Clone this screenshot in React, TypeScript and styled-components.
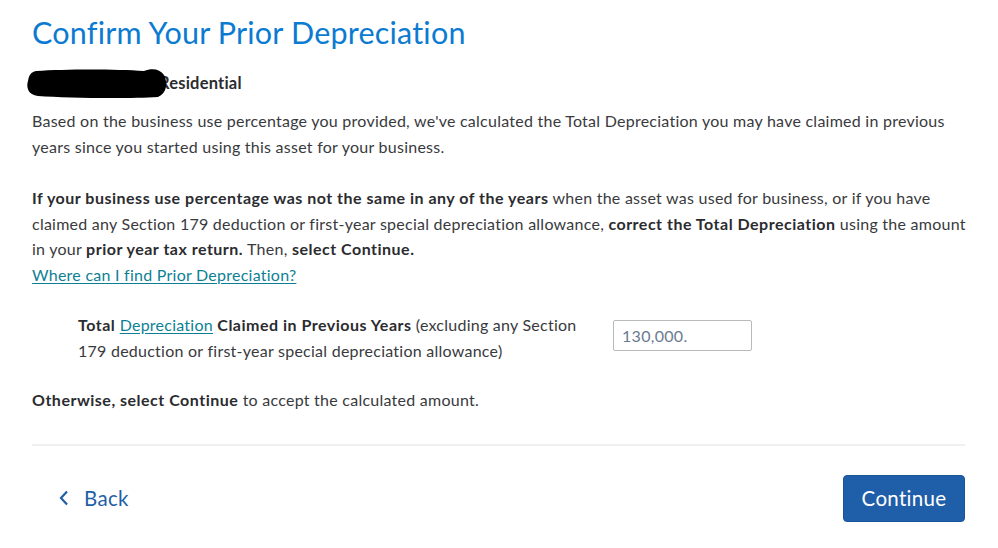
import React from "react";
import styled, { createGlobalStyle } from "styled-components";

const GlobalStyle = createGlobalStyle`
	html, body {
		margin: 0;
		padding: 0;
		background: #ffffff;
	}
	body {
		font-family: "Lato", "Noto Sans", sans-serif;
		color: #393a3d;
	}
`;

const Page = styled.div`
	width: 998px;
	height: 548px;
	box-sizing: border-box;
	padding: 14px 33px 0 32px;
	display: flex;
	flex-direction: column;
`;

const Title = styled.h1`
	margin: 0;
	font-size: 30.5px;
	font-weight: 400;
	color: #0b7bd1;
	line-height: 36px;
	letter-spacing: 0.2px;
`;

const AssetRow = styled.div`
	display: flex;
	align-items: center;
	margin: 18px 0 0 -6px;
	height: 30px;
`;

const Blob = styled.svg`
	position: relative;
	z-index: 1;
	flex-shrink: 0;
`;

const AssetName = styled.span`
	margin-left: -10px;
	font-size: 16.5px;
	font-weight: 700;
	color: #2b2c2f;
	letter-spacing: 0.2px;
`;

const Paragraph = styled.p<{ $top?: number }>`
	margin: ${p => p.$top ?? 0}px -8px 0 0;
	font-size: 16px;
	line-height: 25.5px;
	letter-spacing: 0.25px;
`;

const Strong = styled.b`
	font-weight: 700;
	color: #2b2c2f;
	letter-spacing: 0.5px;
`;

const TextLink = styled.a`
	color: #0d7f95;
	text-decoration: underline;
	text-underline-offset: 2px;
	cursor: pointer;
`;

const FieldRow = styled.div`
	display: flex;
	align-items: center;
	margin: 25px 0 0 46px;
`;

const FieldLabel = styled.div`
	width: 512px;
	font-size: 16px;
	line-height: 26px;
	letter-spacing: 0.25px;
`;

const AmountInput = styled.input`
	margin: -5px 0 0 23px;
	width: 139px;
	height: 31px;
	box-sizing: border-box;
	border: 1px solid #b9babc;
	border-radius: 2px;
	padding: 0 8px;
	font-family: "Lato", "Noto Sans", sans-serif;
	font-size: 16px;
	letter-spacing: 0.3px;
	color: #6b7a90;
	outline: none;
`;

const Divider = styled.hr`
	margin: 31px 0 0;
	border: none;
	border-top: 2px solid #f0f0f0;
`;

const Footer = styled.div`
	display: flex;
	justify-content: space-between;
	align-items: center;
	margin-top: 29px;
`;

const BackButton = styled.button`
	display: flex;
	align-items: center;
	gap: 15px;
	margin-left: 27px;
	background: none;
	border: none;
	padding: 0;
	font-family: "Lato", "Noto Sans", sans-serif;
	font-size: 20.5px;
	letter-spacing: 0.3px;
	color: #1f5fa6;
	cursor: pointer;
`;

const ContinueButton = styled.button`
	width: 122px;
	height: 47px;
	background: #1f5ea8;
	border: 1px solid #1a5597;
	border-radius: 4px;
	color: #ffffff;
	font-family: "Lato", "Noto Sans", sans-serif;
	font-size: 20.5px;
	letter-spacing: 0.3px;
	cursor: pointer;
`;

export default function App() {
	return (
		<>
			<GlobalStyle />
			<Page>
				<Title>Confirm Your Prior Depreciation</Title>
				<AssetRow>
					<Blob width="143" height="32" viewBox="0 0 143 32">
						<path
							d="M10 4 C 40 2, 90 2, 118 4 C 126 1, 134 2, 138 8 C 142 16, 141 26, 132 30 C 100 32, 40 31, 12 29 C 2 28, 0 20, 2 14 C 3 8, 5 5, 10 4 Z"
							fill="#000"
						/>
					</Blob>
					<AssetName>Residential</AssetName>
				</AssetRow>
				<Paragraph $top={10}>
					Based on the business use percentage you provided, we've calculated the Total Depreciation
					you may have claimed in previous years since you started using this asset for your business.
				</Paragraph>
				<Paragraph $top={26}>
					<Strong>If your business use percentage was not the same in any of the years</Strong> when the
					asset was used for business, or if you have claimed any Section 179 deduction or first-year
					special depreciation allowance, <Strong>correct the Total Depreciation</Strong> using the
					amount in your <Strong>prior year tax return.</Strong> Then, <Strong>select Continue.</Strong>
					<br />
					<TextLink>Where can I find Prior Depreciation?</TextLink>
				</Paragraph>
				<FieldRow>
					<FieldLabel>
						<Strong>Total</Strong> <TextLink>Depreciation</TextLink>{" "}
						<Strong>Claimed in Previous Years</Strong> (excluding any Section 179 deduction or
						first-year special depreciation allowance)
					</FieldLabel>
					<AmountInput defaultValue="130,000." />
				</FieldRow>
				<Paragraph $top={23}>
					<Strong>Otherwise, select Continue</Strong> to accept the calculated amount.
				</Paragraph>
				<Divider />
				<Footer>
					<BackButton>
						<svg width="10" height="16" viewBox="0 0 10 16">
							<path d="M8 1.5 L2 8 L8 14.5" fill="none" stroke="#1f5fa6" strokeWidth="2.2" />
						</svg>
						Back
					</BackButton>
					<ContinueButton>Continue</ContinueButton>
				</Footer>
			</Page>
		</>
	);
}
